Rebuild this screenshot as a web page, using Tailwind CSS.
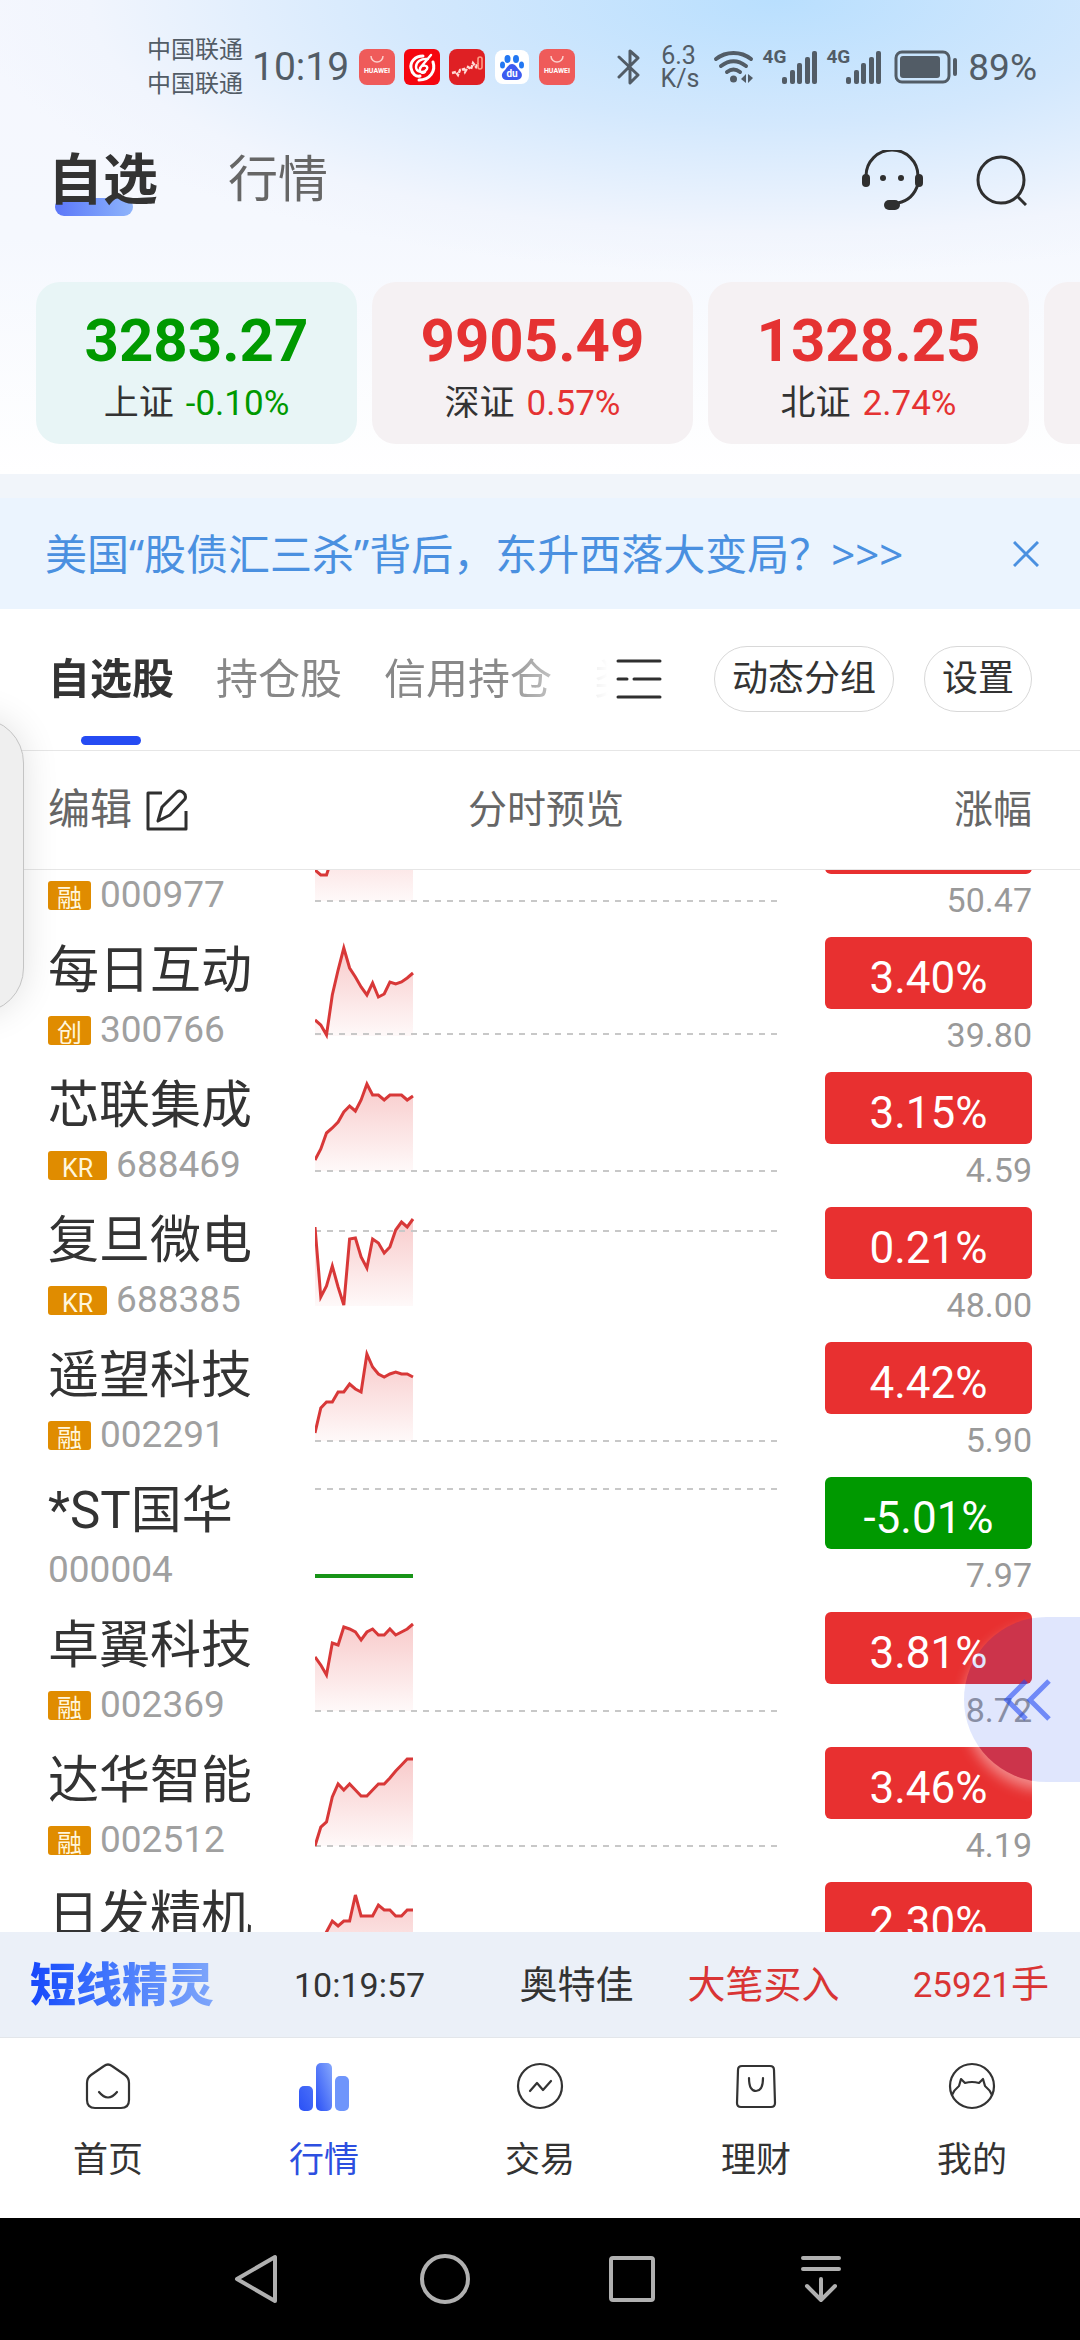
<!DOCTYPE html>
<html lang="zh-CN">
<head>
<meta charset="utf-8">
<meta name="viewport" content="width=device-width, initial-scale=1">
<title>自选</title>
<script src="https://cdn.jsdelivr.net/npm/@tailwindcss/browser@4"></script>
</head>
<body class="bg-white font-[Roboto,'Noto_Sans_CJK_SC',sans-serif] text-[#333]">
<div class="relative flex h-screen flex-col overflow-hidden">

  <header class="shrink-0 bg-[radial-gradient(ellipse_75%_58%_at_72%_0%,#b9dffe_0%,#d3e8fd_45%,#f1f5fd_85%,transparent_100%),linear-gradient(to_bottom,#f5f7fe_0%,#f5f8fe_50%,#ffffff_100%)]">
    <!-- Status bar -->
    <div class="flex h-[134px] items-center pl-[147px] pr-[43px] text-[#525c66]">
      <div class="text-[24px] leading-[34px]"><div>中国联通</div><div>中国联通</div></div>
      <div class="ml-[9px] text-[39px] leading-none">10:19</div>
      <div class="ml-[10px] flex gap-[9px]">
        <svg class="size-9" viewBox="0 0 36 36"><rect width="36" height="36" rx="8" fill="#ef5b5a"/><path d="M12 7a6 6 0 0 0 12 0" fill="none" stroke="#fbd0cc" stroke-width="1.5"/><text x="18" y="24" font-family="Roboto" font-weight="700" font-size="7" fill="#fff" text-anchor="middle">HUAWEI</text></svg>
        <svg class="size-9" viewBox="0 0 36 36"><rect width="36" height="36" rx="6" fill="#f5060f"/><path d="M19 7C11 7 6 13 7 19c1 6 5 9 9 8M29 13c3 9-3 18-14 18" fill="none" stroke="#fff" stroke-width="3" stroke-linecap="round"/><path d="M24 10C17 9 12 13 12 18s8 7 11 2c2-4-6-5-7 0-1 3 3 5 5 3M27 6 16 19" fill="none" stroke="#fff" stroke-width="2.4" stroke-linecap="round"/></svg>
        <svg class="size-9" viewBox="0 0 36 36"><rect width="36" height="36" rx="8" fill="#df2024"/><path d="M3 24l4-1 2 3 2-5 4-1 1 3 3-5 3 2 2-6 3 4 2-4" fill="none" stroke="#ffd9d4" stroke-width="2.4" stroke-dasharray="4 1"/><rect x="29" y="8" width="4" height="12" rx="2" fill="none" stroke="#ff9d84" stroke-width="1.6"/></svg>
        <svg class="size-9" viewBox="0 0 36 36"><rect x="1" y="1" width="34" height="34" rx="8" fill="#fff"/><g fill="#2277f2"><ellipse cx="13.500" cy="10" rx="3" ry="4"/><ellipse cx="22" cy="10" rx="3" ry="4"/><ellipse cx="8.500" cy="16" rx="2.500" ry="3.500"/><ellipse cx="27.500" cy="16" rx="2.500" ry="3.500"/></g><path d="M18 15c4 0 5 4 8 7 4 4 1 9-3 9H13c-5 0-7-5-3-9 3-3 4-7 8-7z" fill="#3d5bf0"/><text x="18" y="28" font-family="Roboto" font-weight="700" font-size="10" fill="#fff" text-anchor="middle">du</text></svg>
        <svg class="size-9" viewBox="0 0 36 36"><rect width="36" height="36" rx="8" fill="#ef5b5a"/><path d="M12 7a6 6 0 0 0 12 0" fill="none" stroke="#fbd0cc" stroke-width="1.5"/><text x="18" y="24" font-family="Roboto" font-weight="700" font-size="7" fill="#fff" text-anchor="middle">HUAWEI</text></svg>
      </div>
      <div class="ml-auto flex items-center">
        <svg class="h-9 w-6" viewBox="0 0 24 36" fill="none" stroke="#525c66" stroke-width="3" stroke-linecap="round" stroke-linejoin="round"><path d="M2 8 21 26 13 34V21M2 28 21 9 13 2v14"/></svg>
        <div class="ml-5 w-9 text-center text-[25px] leading-[23px]"><div>6.3</div><div>K/s</div></div>
        <svg class="ml-4 h-9 w-[42px]" viewBox="0 0 42 36" fill="none" stroke="#525c66" stroke-width="4" stroke-linecap="round"><path d="M3 10c10-8 25-8 35 0M8 17c8-6 17-6 25 0M14 23c4-3 9-3 13 0"/><circle cx="20.500" cy="30" r="3.500" fill="#525c66" stroke="none"/><path d="M28 30l5-5v9zM40 29l-5-4v9z" fill="#525c66" stroke="none"/></svg>
        <div class="ml-2 flex items-start"><span class="text-[19px] font-bold leading-[16px]">4G</span>
        <svg class="-ml-1 h-9 w-9" viewBox="0 0 36 36" fill="#525c66"><rect y="28" width="5" height="7" rx="2"/><rect x="8" y="21" width="5" height="14" rx="2"/><rect x="15" y="14" width="5" height="21" rx="2"/><rect x="23" y="8" width="5" height="27" rx="2"/><rect x="30" y="2" width="5" height="33" rx="2"/></svg></div>
        <div class="ml-2 flex items-start"><span class="text-[19px] font-bold leading-[16px]">4G</span>
        <svg class="-ml-1 h-9 w-9" viewBox="0 0 36 36" fill="#525c66"><rect y="28" width="5" height="7" rx="2"/><rect x="8" y="21" width="5" height="14" rx="2"/><rect x="15" y="14" width="5" height="21" rx="2"/><rect x="23" y="8" width="5" height="27" rx="2"/><rect x="30" y="2" width="5" height="33" rx="2"/></svg></div>
        <svg class="ml-3 h-9 w-16" viewBox="0 0 64 36" fill="#525c66"><rect x="2" y="3" width="53" height="30" rx="6" fill="none" stroke="#525c66" stroke-width="3"/><rect x="6" y="7" width="40" height="22" rx="3"/><rect x="59" y="9" width="4" height="18" rx="2"/></svg>
        <div class="ml-[10px] text-[37px] leading-none">89%</div>
      </div>
    </div>

    <!-- Page tabs -->
    <nav class="flex h-[92px] items-center pl-12 pr-[53px]">
      <a href="#" class="relative text-[55px] font-bold leading-[92px]"><span class="absolute bottom-[10px] left-[7px] h-[18px] w-[78px] rounded-full bg-linear-to-r from-[#5c76f8] to-[#8fb4fb]"></span><span class="relative">自选</span></a>
      <a href="#" class="ml-[70px] text-[50px] leading-[94px] text-[#666]">行情</a>
      <button type="button" aria-label="客服" class="ml-auto">
        <svg class="h-[60px] w-[62px]" viewBox="0 0 62 60" fill="none" stroke="#2f2f2f"><path d="M5 26a26 26 0 0 1 52 0M57 34c-3 10-10 17-20 19" stroke-width="3"/><g fill="#2f2f2f" stroke="none"><rect x="1" y="24" width="8" height="13" rx="4"/><rect x="54" y="24" width="8" height="13" rx="4"/><circle cx="22" cy="28" r="3"/><circle cx="40" cy="28" r="3"/><rect x="23" y="50" width="16" height="10" rx="5"/></g></svg>
      </button>
      <button type="button" aria-label="搜索" class="ml-[52px]">
        <svg class="size-[52px]" viewBox="0 0 52 52" fill="none" stroke="#2f2f2f" stroke-width="3"><circle cx="26" cy="26" r="23"/><path d="m42 42 9 9"/></svg>
      </button>
    </nav>

    <!-- Index cards -->
    <div class="mt-14 flex gap-[15px] overflow-hidden pb-[30px] pl-9 text-center">
      <a href="#" class="h-[162px] w-[321px] shrink-0 rounded-3xl bg-[#e8f5f6] pt-7 text-[#009900]">
        <div class="text-[60px] font-bold leading-[62px]">3283.27</div>
        <div class="text-[35px] leading-[64px]"><span class="mr-3 text-[#333]">上证</span>-0.10%</div>
      </a>
      <a href="#" class="h-[162px] w-[321px] shrink-0 rounded-3xl bg-[#f5f1f3] pt-7 text-[#e53232]">
        <div class="text-[60px] font-bold leading-[62px]">9905.49</div>
        <div class="text-[35px] leading-[64px]"><span class="mr-3 text-[#333]">深证</span>0.57%</div>
      </a>
      <a href="#" class="h-[162px] w-[321px] shrink-0 rounded-3xl bg-[#f5f1f3] pt-7 text-[#e53232]">
        <div class="text-[60px] font-bold leading-[62px]">1328.25</div>
        <div class="text-[35px] leading-[64px]"><span class="mr-3 text-[#333]">北证</span>2.74%</div>
      </a>
      <a href="#" aria-label="更多指数" class="h-[162px] w-[321px] shrink-0 rounded-3xl bg-[#f5f1f3]"></a>
    </div>
  </header>

  <!-- News banner -->
  <div class="shrink-0 bg-[#ebf4fe]">
    <div class="h-6 bg-[#f1f5fa]"></div>
    <div class="flex h-[111px] items-center pl-[45px] pr-[41px] text-[#4a90e0]">
      <a href="#" class="whitespace-nowrap font-['Noto_Sans','Noto_Sans_CJK_SC',sans-serif] text-[42px] leading-[60px]">美国“股债汇三杀”背后，东升西落大变局？&gt;&gt;&gt;</a>
      <button type="button" aria-label="关闭" class="ml-auto"><svg class="size-[26px]" viewBox="0 0 26 26" stroke="#4a90e0" stroke-width="3"><path d="m1 1 24 24M25 1 1 25"/></svg></button>
    </div>
  </div>

  <!-- Watchlist groups -->
  <div class="flex h-[142px] shrink-0 items-center border-b border-[#e6e6e6] pr-12 pb-px">
    <nav class="flex h-full min-w-0 flex-1 gap-[42px] overflow-hidden whitespace-nowrap pl-12 text-[42px] leading-[142px] text-[#888] [mask-image:linear-gradient(to_right,black_82%,transparent)]">
      <a href="#" class="relative font-bold text-[#333]">自选股<span class="absolute bottom-[4px] left-1/2 h-[9px] w-[60px] -translate-x-1/2 rounded-full bg-[#254bf3]"></span></a>
      <a href="#">持仓股</a>
      <a href="#">信用持仓</a>
      <a href="#">类</a>
    </nav>
    <button type="button" aria-label="分组列表" class="ml-2"><svg class="h-10 w-[46px]" viewBox="0 0 46 40" stroke="#2f2f2f" stroke-width="3" stroke-linecap="round"><path d="M2 2h42M2 20h9M18 20h26M2 38h42"/></svg></button>
    <button type="button" class="ml-[52px] h-[66px] rounded-full border border-[#d8d8d8] px-[17px] text-[36px] leading-[64px]">动态分组</button>
    <button type="button" class="ml-[30px] h-[66px] rounded-full border border-[#d8d8d8] px-[17px] text-[36px] leading-[64px]">设置</button>
  </div>

  <!-- Column heads -->
  <div class="flex h-[119px] shrink-0 items-center border-b border-[#e6e6e6] pl-12 pr-12 text-[39px] leading-[60px] text-[#666]">
    <button type="button" class="flex w-[267px] items-center gap-[14px] text-[42px]">编辑
      <svg class="size-[42px]" viewBox="0 0 42 42" fill="none" stroke="#2f2f2f" stroke-width="3" stroke-linejoin="round"><path d="M16 4H2v36h38V22"/><path d="m12 32 4-14L31 3c4-3 10 2 8 7L24 26z"/></svg>
    </button>
    <div class="flex-1 text-center">分时预览</div>
    <div class="w-[255px] text-right">涨幅</div>
  </div>

  <!-- Stock rows -->
  <div class="min-h-0 flex-1 overflow-hidden">
    <svg class="absolute size-0" aria-hidden="true"><defs><linearGradient id="fade" x1="0" y1="25" x2="0" y2="114" gradientUnits="userSpaceOnUse"><stop stop-color="#e53232" stop-opacity=".26"/><stop offset="1" stop-color="#e53232" stop-opacity=".03"/></linearGradient></defs></svg>
    <table class="-mt-[75px] w-full table-fixed">
      <colgroup><col class="w-[315px]"><col><col class="w-[303px]"></colgroup>
      <tbody id="stocks"></tbody>
    </table>
  </div>

  <!-- Ticker -->
  <div class="flex h-[106px] shrink-0 items-center border-b border-[#e3e6ea] bg-[#ebf0f8] pl-[30px] pr-[31px] text-[38px] leading-[60px]">
    <span class="bg-linear-to-r from-[#1746fb] to-[#7fa6fa] bg-clip-text text-[46px] font-black text-transparent">短线精灵</span>
    <span class="ml-20 text-[34px]">10:19:57</span>
    <span class="ml-auto">奥特佳</span>
    <span class="ml-[54px] text-[#d93434]">大笔买入</span>
    <span class="ml-[73px] text-[#d93434]"><span class="text-[35px]">25921</span>手</span>
  </div>

  <!-- App navigation -->
  <nav class="grid h-[180px] shrink-0 grid-cols-5 text-center text-[35px] leading-[50px]">
    <a href="#" class="flex flex-col items-center gap-[26px] pt-6">
      <svg class="size-12" viewBox="0 0 48 48" fill="none" stroke="#333" stroke-width="2.200" stroke-linecap="round"><path d="M20 4q4-3 8 0l13 9q4 3 4 8v17q0 8-8 8H11q-8 0-8-8V21q0-5 4-8z"/><path d="M15 30q9 11 18 0"/></svg>首页</a>
    <a href="#" class="flex flex-col items-center gap-[26px] pt-6 text-[#2d4fe0]">
      <svg class="h-12 w-[50px] overflow-visible" viewBox="0 0 50 48"><defs><linearGradient id="bars" x1="0" y1="1" x2="1" y2="0"><stop stop-color="#2a50f6"/><stop offset="1" stop-color="#86a8fc"/></linearGradient><linearGradient id="bar1" x1="0" y1="1" x2="1" y2="0"><stop stop-color="#2a50f6"/><stop offset="1" stop-color="#4a70f8"/></linearGradient></defs><rect y="24" width="14" height="25" rx="5" fill="url(#bar1)"/><rect x="17" y="1" width="16" height="48" rx="5" fill="url(#bars)"/><rect x="36" y="14" width="14" height="35" rx="5" fill="#6f95fb"/></svg>行情</a>
    <a href="#" class="flex flex-col items-center gap-[26px] pt-6">
      <svg class="size-12" viewBox="0 0 48 48" fill="none" stroke="#333" stroke-width="2.200" stroke-linecap="round" stroke-linejoin="round"><circle cx="24" cy="24" r="22"/><path d="m14 29 7-8 6 7 8-9"/></svg>交易</a>
    <a href="#" class="flex flex-col items-center gap-[26px] pt-6">
      <svg class="size-12" viewBox="0 0 48 48" fill="none" stroke="#333" stroke-width="2.200" stroke-linecap="round"><path d="M10 4h28q4 0 4 4l1 33q0 4-4 4H9q-4 0-4-4L6 8q0-4 4-4z"/><path d="M17 16q0 13 7 13t7-13"/></svg>理财</a>
    <a href="#" class="flex flex-col items-center gap-[26px] pt-6">
      <svg class="size-12" viewBox="0 0 48 48" fill="none" stroke="#333" stroke-width="2.200" stroke-linejoin="round"><circle cx="24" cy="24" r="22"/><path d="M4 33q2-5 7-9l2-7 4 4q7-2 14 0l4-4 2 7q5 4 7 9"/></svg>我的</a>
  </nav>

  <!-- System keys -->
  <div class="flex h-[122px] shrink-0 items-center justify-center bg-black">
    <button type="button" aria-label="返回" class="grid w-[188px] place-items-center"><svg class="size-[52px]" viewBox="0 0 52 52" fill="none" stroke="#b0b0b0" stroke-width="4" stroke-linejoin="round"><path d="M43 4v44L5 26z"/></svg></button>
    <button type="button" aria-label="主屏幕" class="grid w-[188px] place-items-center"><svg class="size-[52px]" viewBox="0 0 52 52" fill="none" stroke="#b0b0b0" stroke-width="4"><circle cx="25" cy="26" r="23"/></svg></button>
    <button type="button" aria-label="最近任务" class="grid w-[188px] place-items-center"><svg class="size-[52px]" viewBox="0 0 52 52" fill="none" stroke="#b0b0b0" stroke-width="4"><rect x="3" y="5" width="42" height="42" rx="2"/></svg></button>
    <button type="button" aria-label="收起" class="grid w-[188px] place-items-center"><svg class="size-[52px]" viewBox="0 0 52 52" fill="none" stroke="#b0b0b0" stroke-width="4" stroke-linecap="round" stroke-linejoin="round"><path d="M7 5h36M7 16h36M25 26v21M11 33l14 14 14-14"/></svg></button>
  </div>

  <!-- Edge drawer handle -->
  <div class="absolute -left-[76px] top-[718px] h-[295px] w-[100px] rounded-[45px] border border-[#c4c4c4] bg-[#efefef] shadow-[0_0_36px_rgba(0,0,0,0.12)]"></div>

  <!-- Floating expand button -->
  <button type="button" aria-label="展开" class="absolute right-0 top-[1617px] flex h-[165px] w-[116px] items-center rounded-l-full bg-[#254bf3]/14 pl-[39px] shadow-[0_8px_14px_rgba(255,255,255,0.45)]">
    <svg class="h-[42px] w-[50px]" viewBox="0 0 50 42" fill="none" stroke="#254bf3" stroke-opacity=".6" stroke-width="5"><path d="M23 2 4 21l19 19M46 2 27 21l19 19"/></svg>
  </button>
</div>

<script>
const stocks = [
  ['浪潮信息', '融', '000977', '1.20%', '50.47', 114, [83,88,88,70,60,50,45,40,44,40,36,34,38,32,30,32,30,28]],
  ['每日互动', '创', '300766', '3.40%', '39.80', 112, [98,103,113,73,48,26,46,55,65,73,61,75,72,60,62,60,56,51]],
  ['芯联集成', 'KR', '688469', '3.15%', '4.59', 114, [103,92,76,71,65,55,49,54,43,27,38,38,43,38,38,38,43,39]],
  ['复旦微电', 'KR', '688385', '0.21%', '48.00', 39, [35,105,94,74,95,113,47,46,65,76,47,51,61,55,38,30,35,27]],
  ['遥望科技', '融', '002291', '4.42%', '5.90', 114, [106,81,75,75,65,65,57,62,65,27,40,47,50,47,45,47,47,50]],
  ['*ST国华', '', '000004', '-5.01%', '7.97', 27, [114,114]],
  ['卓翼科技', '融', '002369', '3.81%', '8.72', 114, [60,68,78,46,48,30,32,35,43,35,32,38,38,32,38,35,32,27]],
  ['达华智能', '融', '002512', '3.46%', '4.19', 114, [114,95,90,65,52,58,52,58,64,64,58,52,52,46,39,33,27,27]],
  ['日发精机', '融', '002520', '2.30%', '6.22', 114, [86,76,65,54,59,54,54,28,49,49,49,38,43,43,49,49,43,43]]
];
document.getElementById('stocks').innerHTML = stocks.map(([name, tag, code, pct, price, base, ys]) => {
  const down = pct[0] === '-';
  const pts = ys.map((y, i) => (i * 98 / (ys.length - 1)).toFixed(1) + ',' + y).join(' ');
  return `<tr class="h-[135px]">
    <td class="p-0 pl-12 align-top">
      <div class="mt-2 h-[66px] whitespace-nowrap text-[51px] leading-[66px]">${name}</div>
      <div class="flex h-[52px] items-center gap-[9px] text-[37px] leading-[52px] text-[#a0a0a0]">
        ${tag ? `<span class="h-[29px] overflow-hidden rounded-[3px] bg-[#e08c00] px-[9px] text-[25px] leading-[36px] text-[#fff6dc]">${tag === 'KR' ? '<span class="px-[5px]">KR</span>' : tag}</span>` : ''}
        <span>${code}</span>
      </div>
    </td>
    <td class="p-0 align-top"><svg class="-mt-2 block h-[135px] w-full" aria-hidden="true">
      ${down ? '' : `<polygon points="0,114 ${pts} 98,114" fill="url(#fade)"/>`}
      <line x1="0" y1="${base}" x2="100%" y2="${base}" stroke="#c8c8c8" stroke-width="2" stroke-dasharray="6 6"/>
      <polyline points="${pts}" fill="none" stroke="${down ? '#189418' : '#d83838'}" stroke-width="${down ? 4 : 3}"/>
    </svg></td>
    <td class="p-0 pl-12 pr-12 align-top">
      <div class="${down ? 'bg-[#009900]' : 'bg-[#e83030]'} mt-[7px] h-[72px] rounded-[6px] text-center text-[44px] leading-[82px] text-white">${pct}</div>
      <div class="text-right text-[34px] leading-[52px] text-[#999]">${price}</div>
    </td></tr>`;
}).join('');
</script>
</body>
</html>
